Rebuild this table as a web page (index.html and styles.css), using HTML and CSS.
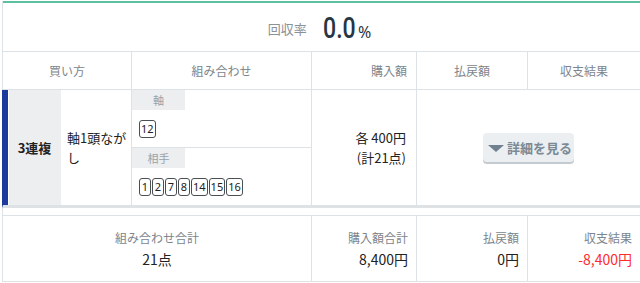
FILE: index.html
```html
<!DOCTYPE html>
<html lang="ja">
<head>
<meta charset="utf-8">
<title>買い目</title>
<link rel="stylesheet" href="styles.css">
</head>
<body>
<div class="sheet">
  <div class="rate">
    <span class="rate-label">回収率</span>
    <span class="rate-value"><span class="rate-num">0.0</span><span class="rate-pct">%</span></span>
  </div>

  <div class="row head">
    <div class="cell c-method center">買い方</div>
    <div class="cell center">組み合わせ</div>
    <div class="cell right">購入額</div>
    <div class="cell center">払戻額</div>
    <div class="cell center last">収支結果</div>
  </div>

  <div class="row body">
    <div class="cell type">3連複</div>
    <div class="cell method">軸1頭ながし</div>
    <div class="cell combo">
      <div class="group">
        <div class="tag">軸</div>
        <div class="nums"><span class="num">12</span></div>
      </div>
      <div class="group">
        <div class="tag">相手</div>
        <div class="nums">
          <span class="num">1</span><span class="num">2</span><span class="num">7</span><span class="num">8</span><span class="num">14</span><span class="num">15</span><span class="num">16</span>
        </div>
      </div>
    </div>
    <div class="cell amount">
      <div>各 400円</div>
      <div>(計21点)</div>
    </div>
    <div class="cell detail last">
      <button class="btn" type="button"><span class="tri"></span>詳細を見る</button>
    </div>
  </div>

  <div class="spacer"></div>

  <div class="row sum">
    <div class="cell s-combo center">
      <div class="s-label">組み合わせ合計</div>
      <div class="s-val">21点</div>
    </div>
    <div class="cell right">
      <div class="s-label">購入額合計</div>
      <div class="s-val">8,400円</div>
    </div>
    <div class="cell right">
      <div class="s-label">払戻額</div>
      <div class="s-val">0円</div>
    </div>
    <div class="cell right last">
      <div class="s-label">収支結果</div>
      <div class="s-val minus">-8,400円</div>
    </div>
  </div>
</div>
</body>
</html>
```

FILE: styles.css
```css
* { box-sizing: border-box; }
html, body { margin: 0; padding: 0; background: #fff; overflow: hidden; }
body {
  font-family: "Noto Sans CJK JP", "Noto Sans", sans-serif;
  color: #222;
  width: 640px;
}
.sheet {
  width: 638px;
  margin: 1px 0 0 2px;
  border-left: 1px solid #dde2e6;
}
.rate {
  height: 51px;
  border-top: 2px solid #5ebea0;
  border-bottom: 1px solid #dde2e6;
  display: flex;
  align-items: center;
  justify-content: center;
  padding-right: 4px;
}
.rate-label {
  font-size: 13px;
  color: #8a9299;
  margin-right: 16px;
  margin-top: 2px;
}
.rate-value { display: flex; align-items: baseline; color: #263642; margin-top: 2px; }
.rate-num {
  font-family: Roboto, "DejaVu Sans", sans-serif;
  font-size: 30px;
  font-weight: 500;
  display: inline-block;
  transform: scaleX(0.77);
  transform-origin: left center;
  margin-right: -9px;
  line-height: 1;
}
.rate-pct {
  font-family: "Noto Sans", sans-serif;
  font-size: 16px;
  margin-left: 2px;
}
.row {
  display: grid;
  grid-template-columns: 58px 71px 180px 105px 111px 1fr;
}
.cell {
  border-right: 1px solid #dde2e6;
  display: flex;
  align-items: center;
}
.cell.last { border-right: none; }
.center { justify-content: center; text-align: center; }
.right { justify-content: flex-end; text-align: right; padding-right: 8px; }

.head {
  height: 38px;
  border-bottom: 1px solid #dde2e6;
  font-size: 12px;
  color: #7d858c;
}
.head .c-method { grid-column: span 2; }
.head .right { padding-right: 9px; }

.body {
  height: 118px;
  margin-left: -1px;
  border-left: 1px solid #1d3b9c;
  border-bottom: 3px solid #dfe2e5;
  font-size: 13px;
}
.type {
  border-right: none;
  border-left: 5px solid #1d3b9c;
  background: linear-gradient(90deg, #fff 1px, #eceef0 1px);
  justify-content: center;
  font-weight: 700;
}
.method {
  padding-left: 6px;
  line-height: 20px;
}
.combo {
  flex-direction: column;
  align-items: stretch;
}
.group + .group { border-top: 1px solid #dde2e6; }
.tag {
  width: 53px;
  height: 20px;
  line-height: 20px;
  background: #eceef0;
  color: #9aa1a7;
  font-size: 11px;
  text-align: center;
}
.nums {
  height: 37px;
  padding: 0 0 0 7px;
  display: flex;
  align-items: center;
  gap: 1px;
}
.num {
  display: inline-flex;
  align-items: center;
  justify-content: center;
  min-width: 12px;
  height: 18px;
  padding: 0 1px;
  border: 1px solid #4a4f54;
  border-radius: 3px;
  font-family: "Noto Sans", sans-serif;
  font-size: 11px;
  color: #222;
}
.amount {
  flex-direction: column;
  align-items: flex-end;
  justify-content: center;
  padding-right: 10px;
  line-height: 20px;
}
.detail {
  grid-column: span 2;
  justify-content: center;
}
.btn {
  display: flex;
  align-items: center;
  width: 91px;
  height: 29px;
  margin-bottom: 1px;
  padding: 0 0 0 5px;
  border: none;
  border-radius: 4px;
  background: #eceff1;
  box-shadow: 0 2px 0 #c3cad0;
  font-family: "Noto Sans CJK JP", sans-serif;
  font-size: 13px;
  font-weight: 700;
  color: #7b8a96;
}
.tri {
  width: 0;
  height: 0;
  border-left: 8px solid transparent;
  border-right: 8px solid transparent;
  border-top: 7px solid #6f8190;
  margin-right: 3px;
  margin-top: 2px;
}
.spacer { height: 7px; }
.sum {
  height: 67px;
  border-top: 1px solid #dde2e6;
  border-bottom: 1px solid #dde2e6;
}
.sum .cell { flex-direction: column; justify-content: center; }
.sum .right { align-items: flex-end; }
.sum .center { align-items: center; }
.s-combo { grid-column: span 3; }
.s-label { font-size: 12px; line-height: 20px; color: #7d858c; }
.s-val { font-size: 14px; line-height: 22px; color: #222; }
.s-val.minus { color: #ff2a2a; }
```
